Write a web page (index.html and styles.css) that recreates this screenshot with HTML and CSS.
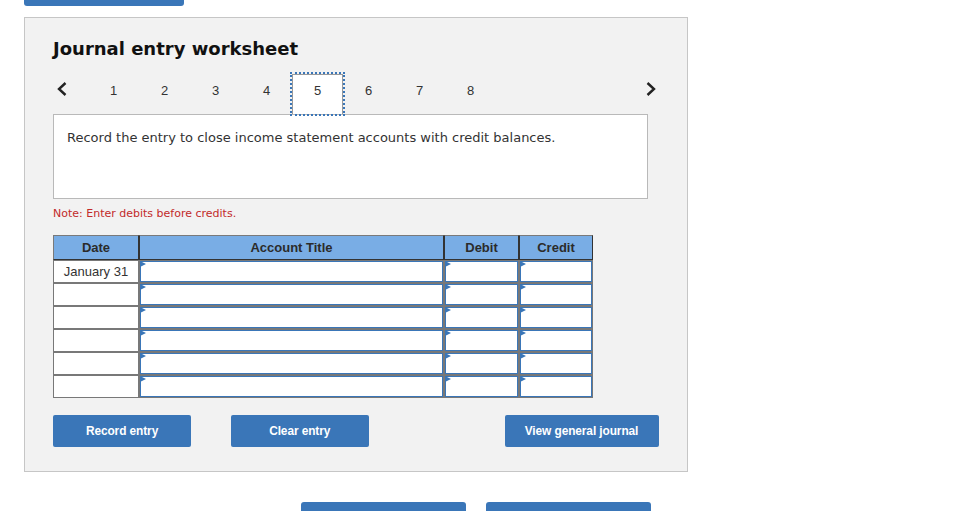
FILE: index.html
```html
<!DOCTYPE html>
<html lang="en">
<head>
<meta charset="utf-8">
<title>Journal entry worksheet</title>
<link rel="stylesheet" href="styles.css">
</head>
<body>
<div class="top-btn"></div>
<section class="panel">
  <h1 class="title">Journal entry worksheet</h1>
  <nav class="steps">
    <span class="chev chev-left"><svg width="10" height="14" viewBox="0 0 10 14"><path d="M8.5 1 L2 7 L8.5 13" fill="none" stroke="#222" stroke-width="2.4"/></svg></span>
    <span class="step">1</span>
    <span class="step">2</span>
    <span class="step">3</span>
    <span class="step">4</span>
    <span class="step step-active">5</span>
    <span class="step">6</span>
    <span class="step">7</span>
    <span class="step">8</span>
    <span class="chev chev-right"><svg width="10" height="14" viewBox="0 0 10 14"><path d="M1.5 1 L8 7 L1.5 13" fill="none" stroke="#222" stroke-width="2.4"/></svg></span>
  </nav>
  <div class="instruction">Record the entry to close income statement accounts with credit balances.</div>
  <p class="note">Note: Enter debits before credits.</p>
  <div class="grid">
    <div class="hcell hfirst">Date</div>
    <div class="hcell">Account Title</div>
    <div class="hcell">Debit</div>
    <div class="hcell">Credit</div>

    <div class="cell date">January 31</div>
    <div class="cell"><div class="inp"></div></div>
    <div class="cell"><div class="inp"></div></div>
    <div class="cell"><div class="inp"></div></div>

    <div class="cell date"></div>
    <div class="cell"><div class="inp"></div></div>
    <div class="cell"><div class="inp"></div></div>
    <div class="cell"><div class="inp"></div></div>

    <div class="cell date"></div>
    <div class="cell"><div class="inp"></div></div>
    <div class="cell"><div class="inp"></div></div>
    <div class="cell"><div class="inp"></div></div>

    <div class="cell date"></div>
    <div class="cell"><div class="inp"></div></div>
    <div class="cell"><div class="inp"></div></div>
    <div class="cell"><div class="inp"></div></div>

    <div class="cell date"></div>
    <div class="cell"><div class="inp"></div></div>
    <div class="cell"><div class="inp"></div></div>
    <div class="cell"><div class="inp"></div></div>

    <div class="cell date"></div>
    <div class="cell"><div class="inp"></div></div>
    <div class="cell"><div class="inp"></div></div>
    <div class="cell"><div class="inp"></div></div>
  </div>
  <div class="actions">
    <button class="btn"><span class="btn-label">Record entry</span></button>
    <button class="btn"><span class="btn-label">Clear entry</span></button>
    <button class="btn btn-wide"><span class="btn-label">View general journal</span></button>
  </div>
</section>
<div class="bottom-btns">
  <div class="bottom-btn"></div>
  <div class="bottom-btn"></div>
</div>
</body>
</html>
```

FILE: styles.css
```css
* { box-sizing: border-box; }
html, body { margin: 0; padding: 0; background: #fff; }
body { font-family: "DejaVu Sans", Verdana, sans-serif; color: #333; }

.top-btn {
  width: 160px; height: 6px; margin-left: 24px;
  background: #3a76b8; border-radius: 0 0 3px 3px;
}

.panel {
  width: 664px; margin: 11px 0 0 24px;
  background: #f2f2f2; border: 1px solid #c6c6c6;
  padding: 20px 28px 24px 28px;
}

.title {
  margin: 0; font-size: 18px; line-height: 22px; font-weight: bold; color: #111;
}

.steps {
  display: flex; align-items: flex-start; height: 40px; margin-top: 14px;
  font-family: "Liberation Sans", Arial, sans-serif; font-size: 13px; color: #333;
}
.chev { display: flex; height: 40px; padding-top: 8px; }
.chev-left { width: 35px; padding-left: 4px; }
.chev-right { margin-left: auto; margin-right: 3px; }
.step {
  width: 51px; height: 40px; text-align: center; line-height: 16px; padding-top: 9px;
}
.step-active {
  position: relative; z-index: 1;
  background: #fff; border: 1px solid #9a9a9a; border-bottom: none;
  outline: 2px dotted #3a76b8; padding-top: 8px;
}

.instruction {
  width: 595px; height: 85px; background: #fff; border: 1px solid #b9b9b9;
  padding: 15px 13px 13px; font-size: 13px; line-height: 16px; color: #333;
}

.note {
  margin: 8px 0 0 0; font-size: 11px; line-height: 14px; color: #c22a2a;
}

.grid {
  display: grid; margin-top: 14px; width: 540px;
  grid-template-columns: 86px 305px 75px 74px;
  grid-template-rows: 25px repeat(6, 23px);
  font-family: "Liberation Sans", Arial, sans-serif; font-size: 13px; color: #333;
}
.hcell {
  background: #79ade5; border: 1px solid #333; border-top-color: #7a7a7a;
  text-align: center; font-weight: bold; line-height: 24px; color: #2b2b2b;
}
.hfirst { border-left-color: #7a7a7a; }
.cell { background: #fff; border: 1px solid #787878; }
.date { text-align: center; line-height: 22px; }
.inp { position: relative; height: 100%; border: 1px solid #3a76b8; }
.inp::before {
  content: ""; position: absolute; left: -1px; top: -1px;
  border-left: 6px solid #3a76b8; border-top: 3.5px solid transparent; border-bottom: 3.5px solid transparent;
}

.actions { display: flex; gap: 40px; margin-top: 17px; }
.btn {
  width: 138px; height: 32px; border: none; border-radius: 2px; background: #3a76b8; color: #fff;
  font-family: "Liberation Sans", Arial, sans-serif; font-weight: bold;
  font-size: 13.5px; padding: 0 0 2px 0; cursor: pointer; white-space: nowrap;
}
.btn-label { display: inline-block; transform: scaleX(0.88); letter-spacing: -0.1px; }
.btn-wide { width: 154px; margin-left: auto; }

.bottom-btns { display: flex; gap: 20px; margin: 30px 0 0 301px; }
.bottom-btn { width: 165px; height: 30px; background: #3a76b8; border-radius: 3px 3px 0 0; }
```
